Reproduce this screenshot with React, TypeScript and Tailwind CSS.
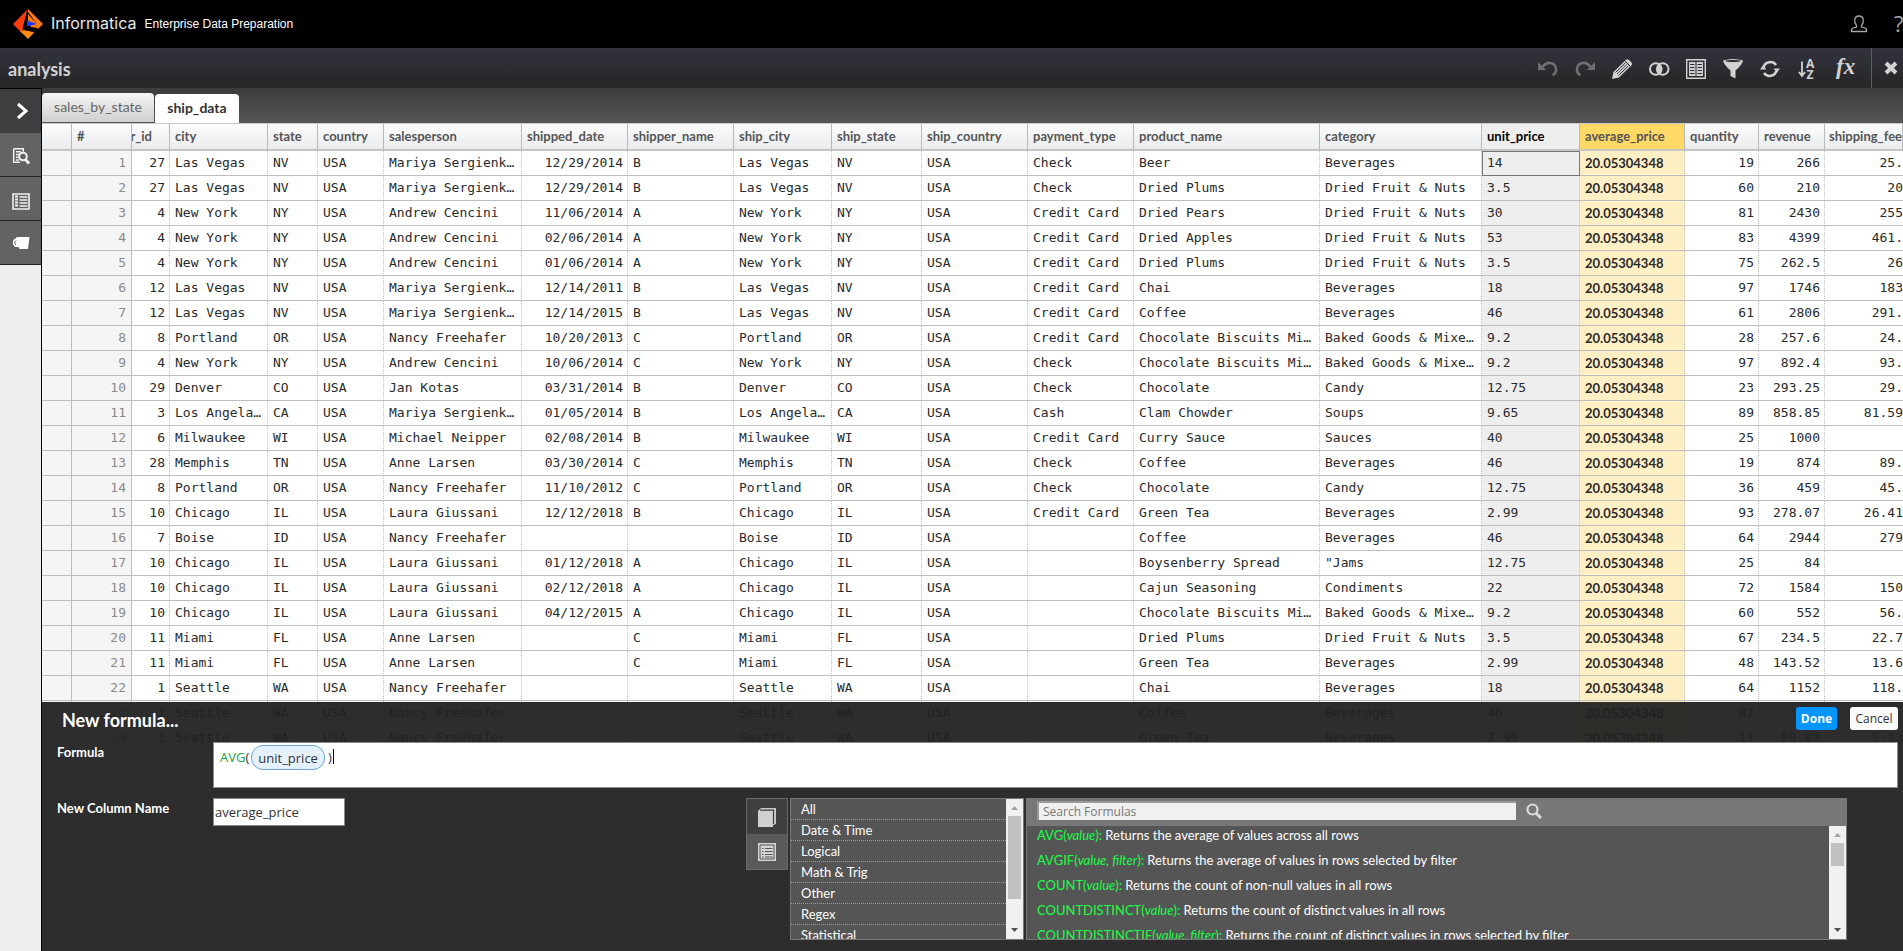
import React, { useState } from 'react';
import clsx from 'clsx';

interface Column {
  key: string;
  label: string;
  width: string;
  align?: 'right';
}

const columns: Column[] = [
  { key: 'city', label: 'city', width: 'w-[98px]' },
  { key: 'state', label: 'state', width: 'w-[50px]' },
  { key: 'country', label: 'country', width: 'w-[66px]' },
  { key: 'salesperson', label: 'salesperson', width: 'w-[138px]' },
  { key: 'shipped_date', label: 'shipped_date', width: 'w-[106px]', align: 'right' },
  { key: 'shipper_name', label: 'shipper_name', width: 'w-[106px]' },
  { key: 'ship_city', label: 'ship_city', width: 'w-[98px]' },
  { key: 'ship_state', label: 'ship_state', width: 'w-[90px]' },
  { key: 'ship_country', label: 'ship_country', width: 'w-[106px]' },
  { key: 'payment_type', label: 'payment_type', width: 'w-[106px]' },
  { key: 'product_name', label: 'product_name', width: 'w-[186px]' },
  { key: 'category', label: 'category', width: 'w-[162px]' },
  { key: 'unit_price', label: 'unit_price', width: 'w-[98px]' },
  { key: 'average_price', label: 'average_price', width: 'w-[105px]' },
  { key: 'quantity', label: 'quantity', width: 'w-[74px]', align: 'right' },
  { key: 'revenue', label: 'revenue', width: 'w-[66px]', align: 'right' },
];

const AVERAGE = '20.05304348';

// id, city, state, salesperson, shipped_date, shipper, payment, product, category, unit_price, quantity, revenue, shipping_fee
const data: string[][] = [
  ['27', 'Las Vegas', 'NV', 'Mariya Sergienk…', '12/29/2014', 'B', 'Check', 'Beer', 'Beverages', '14', '19', '266', '25.'],
  ['27', 'Las Vegas', 'NV', 'Mariya Sergienk…', '12/29/2014', 'B', 'Check', 'Dried Plums', 'Dried Fruit & Nuts', '3.5', '60', '210', '20'],
  ['4', 'New York', 'NY', 'Andrew Cencini', '11/06/2014', 'A', 'Credit Card', 'Dried Pears', 'Dried Fruit & Nuts', '30', '81', '2430', '255'],
  ['4', 'New York', 'NY', 'Andrew Cencini', '02/06/2014', 'A', 'Credit Card', 'Dried Apples', 'Dried Fruit & Nuts', '53', '83', '4399', '461.'],
  ['4', 'New York', 'NY', 'Andrew Cencini', '01/06/2014', 'A', 'Credit Card', 'Dried Plums', 'Dried Fruit & Nuts', '3.5', '75', '262.5', '26'],
  ['12', 'Las Vegas', 'NV', 'Mariya Sergienk…', '12/14/2011', 'B', 'Credit Card', 'Chai', 'Beverages', '18', '97', '1746', '183'],
  ['12', 'Las Vegas', 'NV', 'Mariya Sergienk…', '12/14/2015', 'B', 'Credit Card', 'Coffee', 'Beverages', '46', '61', '2806', '291.'],
  ['8', 'Portland', 'OR', 'Nancy Freehafer', '10/20/2013', 'C', 'Credit Card', 'Chocolate Biscuits Mi…', 'Baked Goods & Mixe…', '9.2', '28', '257.6', '24.'],
  ['4', 'New York', 'NY', 'Andrew Cencini', '10/06/2014', 'C', 'Check', 'Chocolate Biscuits Mi…', 'Baked Goods & Mixe…', '9.2', '97', '892.4', '93.'],
  ['29', 'Denver', 'CO', 'Jan Kotas', '03/31/2014', 'B', 'Check', 'Chocolate', 'Candy', '12.75', '23', '293.25', '29.'],
  ['3', 'Los Angela…', 'CA', 'Mariya Sergienk…', '01/05/2014', 'B', 'Cash', 'Clam Chowder', 'Soups', '9.65', '89', '858.85', '81.59'],
  ['6', 'Milwaukee', 'WI', 'Michael Neipper', '02/08/2014', 'B', 'Credit Card', 'Curry Sauce', 'Sauces', '40', '25', '1000', ''],
  ['28', 'Memphis', 'TN', 'Anne Larsen', '03/30/2014', 'C', 'Check', 'Coffee', 'Beverages', '46', '19', '874', '89.'],
  ['8', 'Portland', 'OR', 'Nancy Freehafer', '11/10/2012', 'C', 'Check', 'Chocolate', 'Candy', '12.75', '36', '459', '45.'],
  ['10', 'Chicago', 'IL', 'Laura Giussani', '12/12/2018', 'B', 'Credit Card', 'Green Tea', 'Beverages', '2.99', '93', '278.07', '26.41'],
  ['7', 'Boise', 'ID', 'Nancy Freehafer', '', '', '', 'Coffee', 'Beverages', '46', '64', '2944', '279'],
  ['10', 'Chicago', 'IL', 'Laura Giussani', '01/12/2018', 'A', '', 'Boysenberry Spread', '"Jams', '12.75', '25', '84', ''],
  ['10', 'Chicago', 'IL', 'Laura Giussani', '02/12/2018', 'A', '', 'Cajun Seasoning', 'Condiments', '22', '72', '1584', '150'],
  ['10', 'Chicago', 'IL', 'Laura Giussani', '04/12/2015', 'A', '', 'Chocolate Biscuits Mi…', 'Baked Goods & Mixe…', '9.2', '60', '552', '56.'],
  ['11', 'Miami', 'FL', 'Anne Larsen', '', 'C', '', 'Dried Plums', 'Dried Fruit & Nuts', '3.5', '67', '234.5', '22.7'],
  ['11', 'Miami', 'FL', 'Anne Larsen', '', 'C', '', 'Green Tea', 'Beverages', '2.99', '48', '143.52', '13.6'],
  ['1', 'Seattle', 'WA', 'Nancy Freehafer', '', '', '', 'Chai', 'Beverages', '18', '64', '1152', '118.'],
  ['1', 'Seattle', 'WA', 'Nancy Freehafer', '', '', '', 'Coffee', 'Beverages', '46', '82', '3772', '377.'],
  ['1', 'Seattle', 'WA', 'Nancy Freehafer', '', '', '', 'Green Tea', 'Beverages', '2.99', '17', '50.83', '5.13'],
];

const categories = ['All', 'Date & Time', 'Logical', 'Math & Trig', 'Other', 'Regex', 'Statistical'];

const functions = [
  { name: 'AVG', args: 'value', text: 'Returns the average of values across all rows' },
  { name: 'AVGIF', args: 'value, filter', text: 'Returns the average of values in rows selected by filter' },
  { name: 'COUNT', args: 'value', text: 'Returns the count of non-null values in all rows' },
  { name: 'COUNTDISTINCT', args: 'value', text: 'Returns the count of distinct values in all rows' },
  { name: 'COUNTDISTINCTIF', args: 'value, filter', text: 'Returns the count of distinct values in rows selected by filter' },
];

const toCells = (r: string[]): string[] => [
  r[1], r[2], 'USA', r[3], r[4], r[5], r[1], r[2], 'USA', r[6], r[7], r[8], r[9], AVERAGE, r[10], r[11],
];

const Logo = () => (
  <svg width="30" height="30" viewBox="0 0 30 30" aria-hidden="true">
    <path d="M15 0 0 15l9 9 5-22z" fill="#ff3d0a" />
    <path d="M15 0l15 15-5 5-10-14z" fill="#ff7a10" />
    <path d="M7 22l5-1 10 1.500-7 7.500z" fill="#ff8a14" />
    <path d="M14.500 1 9.500 19l1.500 2 11 2.500.5-2-9-4 1-6 9 3-8-11z" fill="#000" />
    <path d="M15 5l8 9 5 1-3 4-7-1-3-6z" fill="#ff7a10" />
    <path d="M14 11.500l10 3.500-10 2.500z" fill="#1c35ff" />
  </svg>
);

const tools: { label: string; dim?: boolean; icon: React.ReactNode }[] = [
  {
    label: 'Undo',
    dim: true,
    icon: (
      <>
        <path d="M4.500 8C7 4.500 10 3.500 12.500 4a6.500 6.500 0 0 1 2 12.200" fill="none" stroke="currentColor" strokeWidth="2.600" />
        <path d="M0 3V11h8z" fill="currentColor" />
      </>
    ),
  },
  {
    label: 'Redo',
    dim: true,
    icon: (
      <>
        <path d="M15.500 8C13 4.500 10 3.500 7.500 4a6.500 6.500 0 0 0-2 12.200" fill="none" stroke="currentColor" strokeWidth="2.600" />
        <path d="M20 3V11h-8z" fill="currentColor" />
      </>
    ),
  },
  {
    label: 'Edit',
    icon: (
      <>
        <path d="M0 20l1.500-7L14 .800Q15.500-.300 17 1l2.500 2.500Q20.800 5 19.500 6.200L7 18.500z" fill="currentColor" />
        <path d="M3.500 13.500l10-9.700M6.500 16.500l10-9.700M13.300 2.300l4.700 4.700" stroke="#2b2b31" strokeWidth="1" fill="none" />
        <path d="M5 15l10-9.700" stroke="#2b2b31" strokeWidth=".8" />
      </>
    ),
  },
  {
    label: 'Join',
    icon: (
      <>
        <circle cx="6.800" cy="10" r="5.800" fill="none" stroke="currentColor" strokeWidth="2" />
        <circle cx="13.700" cy="10" r="5.800" fill="none" stroke="currentColor" strokeWidth="2" />
        <path d="M10.200 5.200a6.500 6.500 0 0 1 0 9.600 6.500 6.500 0 0 1 0-9.600z" fill="currentColor" />
      </>
    ),
  },
  {
    label: 'Columns',
    icon: (
      <>
        <path d="M.7.700h18.600v18.600H.7z" fill="none" stroke="currentColor" strokeWidth="1.400" />
        <path d="M3 3h6.500v14H3zM10.500 3H17v14h-6.500z" fill="currentColor" />
        <path d="M4 5.500h4.500M4 8.500h4.500M4 11.500h4.500M4 14.500h4.500M11.500 5.500H16M11.500 8.500H16M11.500 11.500H16M11.500 14.500H16" stroke="#2b2b31" strokeWidth="1" />
      </>
    ),
  },
  {
    label: 'Filter',
    icon: (
      <>
        <path d="M0 1.500Q10-1.500 20 1.500 19 6 12.500 11.500V19.500L7.500 17V11.500Q1 6 0 1.500z" fill="currentColor" />
        <ellipse cx="10" cy="2" rx="7.500" ry="1" fill="#2b2b31" />
      </>
    ),
  },
  {
    label: 'Refresh',
    icon: (
      <>
        <path d="M3.500 8.500A7 7 0 0 1 16 6M16.500 11.500A7 7 0 0 1 4 14" fill="none" stroke="currentColor" strokeWidth="2.600" />
        <path d="M13.500 9.500H20l-3 4zM6.500 10.500H0l3-4z" fill="currentColor" />
      </>
    ),
  },
  {
    label: 'Sort',
    icon: (
      <>
        <path d="M5 2.500v14M2 13l3 4 3-4" fill="none" stroke="currentColor" strokeWidth="1.800" />
        <text x="9" y="9" fontSize="12" fontWeight="700" fontFamily="Open Sans, sans-serif" fill="currentColor">A</text>
        <text x="9.500" y="19.500" fontSize="12" fontWeight="700" fontFamily="Open Sans, sans-serif" fill="currentColor">Z</text>
      </>
    ),
  },
  {
    label: 'Formula',
    icon: (
      <text x="2" y="15" fontSize="23" fontWeight="700" fontStyle="italic" fontFamily="Liberation Serif, serif" fill="currentColor">fx</text>
    ),
  },
];

const ListGlyph = ({ className }: { className?: string }) => (
  <svg className={className} width="20" height="20" viewBox="0 0 20 20" aria-hidden="true">
    <path d="M1 1h18v18H1z" fill="#d4d4d4" />
    <path d="M3 3h14v14H3z" fill="none" stroke="#555" />
    <path d="M5 6.500h1.500M8 6.500h7.500M5 9.500h1.500M8 9.500h7.500M5 12.500h1.500M8 12.500h7.500M5 15h1.500M8 15h7.500" stroke="#555" strokeWidth="1.200" />
  </svg>
);

const ScrollBar = ({ thumb }: { thumb: string }) => (
  <div className="flex w-[17px] shrink-0 flex-col items-center bg-[#f1f1f1]">
    <svg width="17" height="17" viewBox="0 0 17 17" aria-hidden="true">
      <path d="M5 11l3.500-4 3.500 4z" fill="#a3a3a3" />
    </svg>
    <div className={clsx('w-[13px] bg-[#c1c1c1]', thumb)} />
    <svg className="mt-auto" width="17" height="17" viewBox="0 0 17 17" aria-hidden="true">
      <path d="M5 6l3.500 4L12 6z" fill="#505050" />
    </svg>
  </div>
);

const Header = () => (
  <header className="flex h-12 shrink-0 items-center bg-black pl-[13px] text-white">
    <Logo />
    <span className="ml-2 pb-[2px] font-['Inter'] text-base text-[#e8e8e8]">Informatica</span>
    <span className="ml-2 font-['Liberation_Sans',Arial,sans-serif] text-xs">Enterprise Data Preparation</span>
    <div className="ml-auto flex items-center gap-[26px]">
      <button aria-label="User">
        <svg width="18" height="20" viewBox="0 0 18 20" fill="none" stroke="#a5a5a5" strokeWidth="1.300">
          <path d="M6.500 11.500C3.500 8 4 2 9 2s5.500 6 2.500 9.500v1.500l3.500 1c1.500.5 1.700 2 1.500 3.500H1.500C1.300 16 1.500 14.500 3 14l3.500-1z" />
        </svg>
      </button>
      <button aria-label="Help" className="w-[9px] overflow-hidden pb-[2px] font-['Open_Sans',sans-serif] text-[22px] leading-6 text-[#a5a5a5]">
        ?
      </button>
    </div>
  </header>
);

const Toolbar = () => (
  <div className="flex h-10 shrink-0 items-center bg-linear-to-b from-[#33333f] to-[#262626] text-[#d2d2d2]">
    <h1 className="pt-[2px] pl-2 text-lg font-bold">analysis</h1>
    <div className="ml-auto flex items-center gap-[17px] pt-[2px] pr-[17px]">
      {tools.map(tool => (
        <button key={tool.label} aria-label={tool.label} className={clsx(tool.dim && 'text-[#707070]')}>
          <svg width="20" height="20" viewBox="0 0 20 20" className="overflow-visible">{tool.icon}</svg>
        </button>
      ))}
    </div>
    <button aria-label="Close" className="flex h-full w-8 items-center justify-end border-l border-[#4a6274] pr-[5px]">
      <svg width="14" height="14" viewBox="0 0 14 14">
        <path d="M2 2l10 10M12 2L2 12" stroke="currentColor" strokeWidth="4" />
      </svg>
    </button>
  </div>
);

const SideBar = () => (
  <nav className="w-[42px] shrink-0 border-r border-black bg-[#eee]">
    <button aria-label="Expand" className="flex h-[45px] w-full items-center justify-center border-t border-black bg-[#3e3e40] pl-[2px]">
      <svg width="14" height="18" viewBox="0 0 14 18" fill="none">
        <path d="M3 2l8 7-8 7" stroke="#fff" strokeWidth="3" />
      </svg>
    </button>
    <button aria-label="Preview" className="flex h-11 w-full items-center justify-center border-b border-[#222] bg-[#636363] pt-[3px]">
      <svg width="18" height="18" viewBox="0 0 18 18">
        <path d="M1.700 1.700h9.600v3M1.700 1.700v13.600H8" fill="none" stroke="#f2f2f2" strokeWidth="1.500" />
        <path d="M4 4.700h5M4 7.500h3M4 10.300h2.500M4 13h3" stroke="#f2f2f2" strokeWidth="1.400" />
        <circle cx="11" cy="9.500" r="3.800" fill="none" stroke="#f2f2f2" strokeWidth="2" />
        <path d="M13.500 12.500l3.500 4" stroke="#f2f2f2" strokeWidth="2.800" />
      </svg>
    </button>
    <button aria-label="Columns" className="flex h-11 w-full items-center justify-center border-b border-[#222] bg-[#636363] pt-[5px]">
      <svg width="18" height="17" viewBox="0 0 18 17">
        <path d="M1 1h16v15H1z" fill="none" stroke="#f2f2f2" strokeWidth="1.600" />
        <path d="M3 3.500h3M3 6.500h3M3 9.500h3M3 12.500h3" stroke="#f2f2f2" strokeWidth="2" />
        <path d="M7.500 4h8M7.500 7h8M7.500 10h8M7.500 13h8" stroke="#f2f2f2" strokeWidth="1.400" />
      </svg>
    </button>
    <button aria-label="Recipe" className="flex h-11 w-full items-center justify-center border-b border-[#222] bg-[#636363]">
      <svg width="18" height="14" viewBox="0 0 18 14">
        <path d="M5 1h12.500L16 13H7.500L6.500 11H3.500C0 10 0 3 3.500 2.500z" fill="#fff" />
        <path d="M4 4.500C2.500 5.500 2.500 8 4 9" fill="none" stroke="#636363" />
      </svg>
    </button>
  </nav>
);

const headCell =
  'h-[27px] border-r border-b-2 border-r-[#b9b9b9] border-b-[#c4c4c4] text-left';

const DataGrid = () => (
  <div className="overflow-hidden border-t border-[#c9c9c9]">
    <table className="w-[1861px] table-fixed border-separate border-spacing-0">
      <thead className="text-[13px] font-bold text-[#555]">
        <tr className="bg-linear-to-b from-[#fcfcfc] to-[#e8eaec]">
          <th className={clsx(headCell, 'w-[30px]')} aria-label="Select" />
          <th className={clsx(headCell, 'w-[60px] pl-[5px]')}>#</th>
          <th className={clsx(headCell, 'w-[38px]')}>
            <div className="flex justify-end overflow-hidden pr-[17px]">
              <span className="shrink-0">order_id</span>
            </div>
          </th>
          {columns.map(col => (
            <th
              key={col.key}
              className={clsx(
                headCell,
                'pl-[5px]',
                col.width,
                col.key === 'unit_price' && 'bg-[#eee] text-black',
                col.key === 'average_price' && 'bg-[#ffd966]'
              )}
            >
              {col.label}
            </th>
          ))}
          <th className={clsx(headCell, 'overflow-hidden pl-1 whitespace-nowrap')}>shipping_fee</th>
        </tr>
      </thead>
      <tbody className="font-['DejaVu_Sans_Mono',monospace] text-[13px] leading-6 whitespace-nowrap text-[#2a2a2a]">
        {data.map((row, i) => (
          <tr key={i}>
            <td className="h-[25px] border-r border-b border-[#bdbdbd] bg-[#f5f5f5]" />
            <td className="border-r border-b border-[#bdbdbd] bg-[#f5f5f5] pr-[5px] text-right text-[#8a8a8a]">{i + 1}</td>
            <td className="border-r border-b border-[#bdbdbd] [border-right-style:dotted] pr-1 text-right">{row[0]}</td>
            {toCells(row).map((cell, j) => {
              const col = columns[j];
              return (
                <td
                  key={col.key}
                  className={clsx(
                    'overflow-hidden border-b border-r border-[#bdbdbd] [border-right-style:dotted]',
                    col.align === 'right' ? 'pr-1 text-right' : 'pl-[5px]',
                    col.key === 'unit_price' && 'bg-[#eee]',
                    col.key === 'unit_price' && i === 0 && 'outline -outline-offset-1 outline-[#777]',
                    col.key === 'average_price' && "bg-[#ffefc4] font-['Lato',sans-serif] font-bold"
                  )}
                >
                  {cell}
                </td>
              );
            })}
            <td className="overflow-hidden border-b border-[#bdbdbd] text-right">{row[12]}</td>
          </tr>
        ))}
      </tbody>
    </table>
  </div>
);

const FormulaPanel = () => {
  const [columnName, setColumnName] = useState('average_price');
  const [search, setSearch] = useState('');

  return (
    <section className="absolute inset-x-0 bottom-0 bg-[#222222]/95 pt-[5px] pr-[5px] pb-[11px] pl-[15px] text-white">
      <div className="flex h-[23px] items-center">
        <h2 className="pt-[3px] pl-[5px] text-lg font-bold">New formula...</h2>
        <div className="ml-auto flex gap-[13px] font-['Open_Sans',sans-serif] text-xs">
          <button className="h-[23px] w-[41px] rounded-[3px] bg-[#0095ff] font-bold">Done</button>
          <button className="h-[23px] w-12 rounded-[3px] bg-[#fafafa] text-[#333]">Cancel</button>
        </div>
      </div>

      <div className="mt-3 flex">
        <label htmlFor="formula" className="w-[156px] shrink-0 text-[13px] leading-5 font-bold">Formula</label>
        <div className="flex h-[46px] flex-1 items-start border border-[#8a8a8a] bg-white pt-[2px] pl-[6px] font-['Open_Sans',sans-serif] text-[13px] leading-[25px] text-[#333]">
          <span className="text-[#21a047]">AVG</span>
          <span>(</span>
          <span className="ml-[2px] h-[25px] rounded-xl border border-[#6ba5d4] bg-[#e5f2fd] px-[6px] leading-6">unit_price</span>
          <span className="ml-[3px]">)</span>
          <span className="mt-1 ml-px h-[15px] w-px bg-black" />
          <input id="formula" className="h-6 flex-1 outline-none" />
        </div>
      </div>

      <div className="mt-[10px] flex items-start">
        <label htmlFor="column-name" className="w-[156px] shrink-0 text-[13px] leading-5 font-bold">New Column Name</label>
        <input
          id="column-name"
          value={columnName}
          onChange={e => setColumnName(e.target.value)}
          className="h-7 w-[132px] border border-[#8a8a8a] bg-white px-px font-['Open_Sans',sans-serif] text-[13px] text-[#333]"
        />
        <div className="mr-[51px] ml-auto flex h-[142px] items-start text-[13px]">
          <div className="flex w-[42px] flex-col border border-[#6a6a6a]">
            <button aria-label="Functions" className="flex h-[35px] items-center justify-center bg-[#404040]">
              <svg width="20" height="20" viewBox="0 0 20 20">
                <path d="M1 4l3-3h15v16l-3 1V4z" fill="#c8c8c8" />
                <path d="M1 3.500h15V20H1z" fill="#d0d0d0" />
                <path d="M3 3.200h13.500V17" fill="none" stroke="#404040" strokeWidth="1.200" />
              </svg>
            </button>
            <button aria-label="Columns" className="flex h-[35px] items-center justify-center bg-[#5a5a5a]">
              <ListGlyph />
            </button>
          </div>

          <div className="ml-[2px] flex h-full w-[234px] overflow-hidden border border-[#777] bg-[#555]">
            <ul className="flex-1">
              {categories.map(name => (
                <li key={name} className="h-[21px] border-b border-dotted border-[#999] pl-[10px] leading-5">{name}</li>
              ))}
            </ul>
            <ScrollBar thumb="h-[83px]" />
          </div>

          <div className="ml-[2px] flex h-full w-[821px] flex-col border border-[#777] bg-[#555]">
            <div className="flex h-[27px] shrink-0 items-start bg-[#777] pt-[2px] pl-[10px]">
              <input
                aria-label="Search Formulas"
                placeholder="Search Formulas"
                value={search}
                onChange={e => setSearch(e.target.value)}
                className="h-[19px] w-[479px] border-t-2 border-l-2 border-[#999] bg-[#f0f0f0] px-1 pb-px font-['Open_Sans',sans-serif] text-xs text-[#333] placeholder:text-[#777]"
              />
              <button aria-label="Search" className="ml-[10px] pt-[2px]">
                <svg width="16" height="16" viewBox="0 0 16 16" fill="none" stroke="#ddd">
                  <circle cx="6.500" cy="6.500" r="5" strokeWidth="2.200" />
                  <path d="M10 10l5 5" strokeWidth="3" />
                </svg>
              </button>
            </div>
            <div className="flex min-h-0 flex-1">
              <ul className="flex-1 overflow-hidden pl-[10px] leading-[25px]">
                {functions.map((fn, i) => (
                  <li key={fn.name} className={clsx('h-[25px]', i === 0 && '-mt-[3px]')}>
                    <span className="text-[#19ff46]">
                      {fn.name}(<i>{fn.args}</i>):
                    </span>{' '}
                    {fn.text}
                  </li>
                ))}
              </ul>
              <ScrollBar thumb="h-[23px]" />
            </div>
          </div>
        </div>
      </div>
    </section>
  );
};

export default function App() {
  return (
    <div className="flex h-screen flex-col overflow-hidden bg-white font-['Lato',sans-serif]">
      <Header />
      <Toolbar />
      <div className="flex min-h-0 flex-1">
        <SideBar />
        <main className="relative min-w-0 flex-1 overflow-hidden">
          <div role="tablist" className="flex h-[35px] items-end gap-px bg-linear-to-b from-[#3b3b3b] to-[#575757] text-sm">
            <button role="tab" aria-selected="false" className="mb-px h-[29px] w-28 rounded-t bg-linear-to-b from-[#f6f6f6] to-[#cfcfcf] pb-[2px] text-[#666]">
              sales_by_state
            </button>
            <button role="tab" aria-selected="true" className="h-[29px] w-[84px] rounded-t bg-white pb-[2px] font-bold text-[#333]">
              ship_data
            </button>
          </div>
          <DataGrid />
          <FormulaPanel />
        </main>
      </div>
    </div>
  );
}
